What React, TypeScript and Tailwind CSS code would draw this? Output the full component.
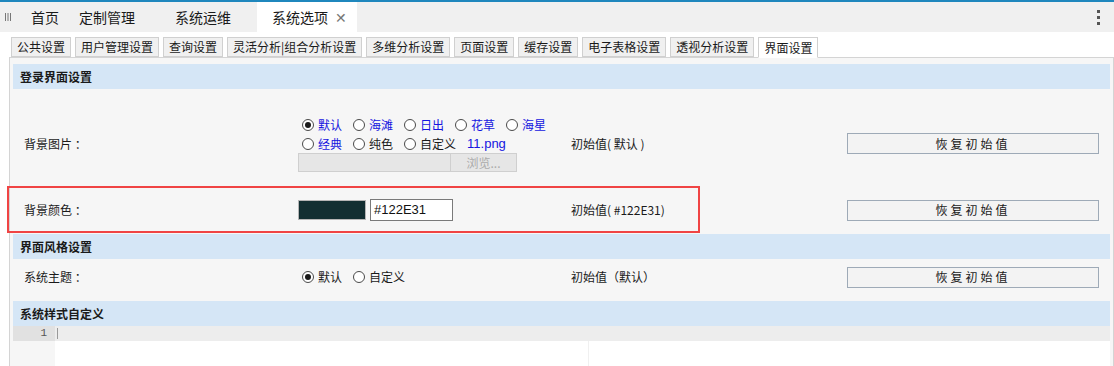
import React from 'react'

const FONT = "font-['Microsoft_YaHei','Noto_Sans_CJK_SC',sans-serif]"

const mainTabs = ['首页', '定制管理', '系统运维']
const subTabs = [
  '公共设置',
  '用户管理设置',
  '查询设置',
  '灵活分析|组合分析设置',
  '多维分析设置',
  '页面设置',
  '缓存设置',
  '电子表格设置',
  '透视分析设置',
  '界面设置',
]

function Radio({ checked, label, link }: { checked?: boolean; label: string; link?: boolean }) {
  return (
    <label className="flex items-center gap-[4px] whitespace-nowrap">
      <span className="w-[12px] h-[12px] rounded-full border border-[#4a4a4a] bg-white flex items-center justify-center shrink-0">
        {checked && <span className="w-[6px] h-[6px] rounded-full bg-[#1a1a1a]" />}
      </span>
      <span className={link ? 'text-[#1515e0]' : 'text-[#1a1a1a]'}>{label}</span>
    </label>
  )
}

function SectionHeader({ title }: { title: string }) {
  return (
    <div className="h-[25px] bg-[#d5e6f6] pl-[7px] flex items-center text-[12px] font-bold text-[#1a1a1a]">
      {title}
    </div>
  )
}

function ResetButton() {
  return (
    <button className="w-[252px] h-[21px] border border-[#9eaab7] bg-[#f3f3f3] text-[12px] tracking-[3px] text-[#1a1a1a] flex items-center justify-center">
      恢复初始值
    </button>
  )
}

export default function App() {
  return (
    <div className={`${FONT} w-[1114px] h-[366px] overflow-hidden bg-white text-[12px] text-[#1a1a1a]`}>
      {/* 顶部页签 */}
      <div className="h-[2px] bg-[#1f87bd]" />
      <div className="h-[30px] bg-[#f0f0f0] flex items-stretch text-[14px] text-[#1a1a1a]">
        <div className="w-[31px] pl-[5px] flex items-center">
          <svg width="6" height="8" viewBox="0 0 6 8">
            <rect x="0" y="0" width="1" height="8" fill="#777" />
            <rect x="2.5" y="0" width="1" height="8" fill="#777" />
            <rect x="5" y="0" width="1" height="8" fill="#777" />
          </svg>
        </div>
        {mainTabs.map((t, i) => (
          <div
            key={t}
            className={`flex items-center ${i === 1 ? 'ml-[20px]' : ''} ${i === 2 ? 'ml-[40px]' : ''}`}
          >
            {t}
          </div>
        ))}
        <div className="ml-[26px] bg-white pl-[15px] pr-[10px] flex items-center">
          <span>系统选项</span>
          <span className="ml-[7px] text-[#777] text-[14px]">✕</span>
        </div>
        <div className="flex-1" />
        <div className="w-[20px] mr-[6px] flex flex-col items-center justify-center gap-[3px]">
          <span className="w-[3px] h-[3px] bg-[#555]" />
          <span className="w-[3px] h-[3px] bg-[#555]" />
          <span className="w-[3px] h-[3px] bg-[#555]" />
        </div>
      </div>

      {/* 子页签 */}
      <div className="h-[25px] pt-[5px] pl-[11px] flex items-end gap-[4px]">
        {subTabs.map((t, i) => {
          const active = i === subTabs.length - 1
          return (
            <div
              key={t}
              className={`px-[5px] border border-[#d0d0d0] flex items-center whitespace-nowrap leading-[16px] ${
                active ? 'bg-white border-b-white h-[21px] relative z-10 -mb-px' : 'bg-[#f0f0f0] h-[20px]'
              }`}
            >
              {t}
            </div>
          )
        })}
      </div>

      {/* 内容面板 */}
      <div className="ml-[9px] border-l border-t border-r border-[#d4d4d4] bg-[#f6f6f6] px-[3px] pt-[6px]">
        <SectionHeader title="登录界面设置" />

        {/* 背景图片 */}
        <div className="h-[97px] pt-[12px] flex items-center">
          <div className="w-[285px] pl-[11px]">背景图片 ：</div>
          <div className="w-[273px] flex flex-col">
            <div className="h-[20px] pl-[4px] flex items-center gap-[11px]">
              <Radio checked label="默认" link />
              <Radio label="海滩" link />
              <Radio label="日出" link />
              <Radio label="花草" link />
              <Radio label="海星" link />
            </div>
            <div className="h-[18px] pl-[4px] flex items-center gap-[11px]">
              <Radio label="经典" link />
              <Radio label="纯色" />
              <Radio label="自定义" />
              <span className="text-[#1515e0] font-['Liberation_Sans',sans-serif] text-[13px]">11.png</span>
            </div>
            <div className="h-[19px] flex">
              <div className="w-[153px] h-full bg-[#e6e6e6] border border-[#cfcfcf]" />
              <div className="w-[66px] h-full bg-[#e6e6e6] border border-[#cfcfcf] border-l-0 flex items-center justify-center text-[#ababab]">
                浏览...
              </div>
            </div>
          </div>
          <div className="w-[276px] whitespace-nowrap">初始值( 默认 )</div>
          <ResetButton />
        </div>

        {/* 背景颜色 */}
        <div className="relative h-[48px] flex items-center">
          <div className="absolute -left-[6px] top-0 w-[693px] h-[47px] border-2 border-[#f04444] pointer-events-none" />
          <div className="w-[285px] pl-[11px]">背景颜色 ：</div>
          <div className="w-[273px] flex items-center gap-[4px]">
            <div className="w-[68px] h-[20px] bg-[#122E31] border border-[#b5b5b5]" />
            <div className="w-[83px] h-[22px] border border-[#7a7a7a] bg-white pl-[3px] flex items-center font-['Liberation_Sans',sans-serif] text-[13px] text-[#111]">
              #122E31
            </div>
          </div>
          <div className="w-[276px] whitespace-nowrap">初始值( #122E31)</div>
          <ResetButton />
        </div>

        <SectionHeader title="界面风格设置" />

        {/* 系统主题 */}
        <div className="h-[42px] pb-[6px] flex items-center">
          <div className="w-[285px] pl-[11px]">系统主题 ：</div>
          <div className="w-[273px] pl-[4px] flex items-center gap-[11px]">
            <Radio checked label="默认" />
            <Radio label="自定义" />
          </div>
          <div className="w-[276px] whitespace-nowrap">初始值（默认）</div>
          <ResetButton />
        </div>

        <SectionHeader title="系统样式自定义" />

        {/* 代码编辑区 */}
        <div className="h-[15px] bg-[#ededed] flex items-stretch">
          <div className="w-[42px] bg-[#e1e1e1] pr-[8px] text-right text-[11px] leading-[15px] text-[#555] font-['Liberation_Mono',monospace]">
            1
          </div>
          <div className="ml-[2px] my-[2px] w-px bg-[#999]" />
        </div>
        <div className="h-[40px] flex">
          <div className="w-[42px] bg-[#f6f6f6]" />
          <div className="flex-1 bg-white flex">
            <div className="w-[533px]" />
            <div className="w-px bg-[#f0f0f0]" />
          </div>
        </div>
      </div>
    </div>
  )
}
